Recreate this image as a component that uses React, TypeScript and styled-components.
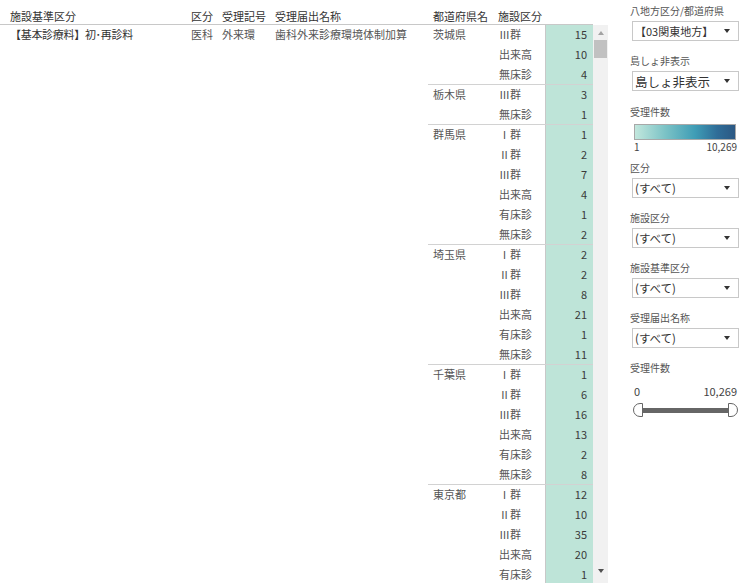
import React from 'react';
import styled, { createGlobalStyle } from 'styled-components';

const GlobalStyle = createGlobalStyle`
  html, body { margin: 0; padding: 0; background: #fff; }
  body {
    font-family: "Noto Sans CJK JP", "Noto Sans", sans-serif;
    font-size: 11px;
    color: #333;
    overflow: hidden;
  }
  * { box-sizing: border-box; }
`;

const Page = styled.div`
  display: flex;
  width: 743px;
  height: 583px;
  overflow: hidden;
`;

const TableArea = styled.div`
  width: 608px;
  flex-shrink: 0;
  display: flex;
  flex-direction: column;
`;

const HeaderRow = styled.div`
  display: grid;
  grid-template-columns: 191px 31px 53px 153px 66px 51px 48px;
  width: 593px;
  height: 25px;
  border-bottom: 1px solid #c8c8c8;
`;

const HeaderCell = styled.div<{ $pl?: number }>`
  padding-left: ${(p) => p.$pl ?? 0}px;
  padding-top: 10px;
  line-height: 13px;
  color: #333;
  white-space: nowrap;
`;

const Body = styled.div`
  display: flex;
  height: 558px;
  overflow: hidden;
`;

const LeftBlock = styled.div`
  width: 428px;
  flex-shrink: 0;
  display: grid;
  grid-template-columns: 191px 31px 53px 153px;
  align-content: start;
`;

const TextCell = styled.div<{ $pl?: number; $dark?: boolean; $ls?: number }>`
  padding-left: ${(p) => p.$pl ?? 0}px;
  padding-top: 1px;
  line-height: 17px;
  letter-spacing: ${(p) => p.$ls ?? 0}px;
  color: ${(p) => (p.$dark ? '#333' : '#555')};
  white-space: nowrap;
`;

const GroupsColumn = styled.div`
  width: 165px;
  flex-shrink: 0;
  display: flex;
  flex-direction: column;
`;

const Group = styled.div<{ $first?: boolean }>`
  display: flex;
  border-top: ${(p) => (p.$first ? 'none' : '1px solid #d2d2d2')};
  margin-top: ${(p) => (p.$first ? 0 : -1)}px;
`;

const PrefCell = styled.div`
  width: 66px;
  flex-shrink: 0;
  padding-left: 5px;
  padding-top: 1px;
  line-height: 17px;
  color: #555;
`;

const RowsCol = styled.div`
  display: flex;
  flex-direction: column;
`;

const DataRow = styled.div`
  display: flex;
  height: 20px;
`;

const TypeCell = styled.div`
  width: 51px;
  padding-left: 5px;
  padding-top: 1px;
  line-height: 17px;
  color: #555;
  white-space: nowrap;
`;

const ValueCell = styled.div`
  width: 48px;
  background: #bee4d8;
  border-left: 1px solid #c8c8c8;
  text-align: right;
  padding-right: 6px;
  padding-top: 1px;
  line-height: 17px;
  color: #3a3a3a;
`;

const Scrollbar = styled.div`
  width: 15px;
  flex-shrink: 0;
  background: #f1f1f1;
  display: flex;
  flex-direction: column;
  align-items: center;
`;

const ArrowBox = styled.div<{ $bottom?: boolean }>`
  width: 15px;
  height: 15px;
  display: flex;
  align-items: center;
  justify-content: center;
  margin-bottom: ${(p) => (p.$bottom ? 5 : 0)}px;
`;

const Tri = styled.div<{ $dir: 'up' | 'down'; $color: string }>`
  width: 0;
  height: 0;
  border-left: 3.5px solid transparent;
  border-right: 3.5px solid transparent;
  ${(p) =>
    p.$dir === 'up'
      ? `border-bottom: 4px solid ${p.$color};`
      : `border-top: 4px solid ${p.$color};`}
`;

const Thumb = styled.div`
  width: 13px;
  height: 18px;
  background: #c1c1c1;
`;

const Spacer = styled.div`
  flex: 1;
`;

const Panel = styled.div`
  margin-left: 22px;
  width: 110px;
  padding-top: 4px;
  display: flex;
  flex-direction: column;
`;

const Filter = styled.div<{ $mt?: number }>`
  margin-top: ${(p) => p.$mt ?? 0}px;
  display: flex;
  flex-direction: column;
`;

const FilterLabel = styled.div`
  font-size: 10px;
  line-height: 14px;
  height: 14px;
  color: #555;
  white-space: nowrap;
`;

const Dropdown = styled.div<{ $fs?: number }>`
  margin-top: 3px;
  margin-left: 2px;
  width: 107px;
  height: 20px;
  border: 1px solid #c8c8c8;
  display: flex;
  align-items: center;
  justify-content: space-between;
  padding: 0 8px 0 2px;
  font-size: ${(p) => p.$fs ?? 11.5}px;
  color: #333;
  white-space: nowrap;
`;

const LegendBar = styled.div`
  margin-top: 5px;
  margin-left: 4px;
  width: 102px;
  height: 16px;
  border: 1px solid #a8a8a8;
  background: linear-gradient(to right, #c2e7dd 0%, #7cc3c6 30%, #3f9db6 60%, #2f6d98 82%, #2c5883 100%);
`;

const RangeText = styled.div<{ $fs: number; $lh: number; $mt?: number }>`
  margin-top: ${(p) => p.$mt ?? 0}px;
  display: flex;
  justify-content: space-between;
  padding: 0 3px 0 4px;
  font-size: ${(p) => p.$fs}px;
  line-height: ${(p) => p.$lh}px;
  color: #444;
`;

const SliderRow = styled.div`
  margin-top: 6px;
  margin-left: 3px;
  width: 105px;
  height: 14px;
  display: flex;
  align-items: center;
`;

const Handle = styled.div<{ $side: 'left' | 'right' }>`
  width: 10px;
  height: 14px;
  background: #fff;
  border: 1px solid #666;
  border-radius: ${(p) => (p.$side === 'left' ? '7px 0 0 7px' : '0 7px 7px 0')};
`;

const SliderBar = styled.div`
  flex: 1;
  height: 5px;
  background: #666;
`;

type Row = [string, number];
const groups: { pref: string; rows: Row[] }[] = [
  { pref: '茨城県', rows: [['Ⅲ群', 15], ['出来高', 10], ['無床診', 4]] },
  { pref: '栃木県', rows: [['Ⅲ群', 3], ['無床診', 1]] },
  {
    pref: '群馬県',
    rows: [['Ⅰ群', 1], ['Ⅱ群', 2], ['Ⅲ群', 7], ['出来高', 4], ['有床診', 1], ['無床診', 2]],
  },
  {
    pref: '埼玉県',
    rows: [['Ⅰ群', 2], ['Ⅱ群', 2], ['Ⅲ群', 8], ['出来高', 21], ['有床診', 1], ['無床診', 11]],
  },
  {
    pref: '千葉県',
    rows: [['Ⅰ群', 1], ['Ⅱ群', 6], ['Ⅲ群', 16], ['出来高', 13], ['有床診', 2], ['無床診', 8]],
  },
  {
    pref: '東京都',
    rows: [['Ⅰ群', 12], ['Ⅱ群', 10], ['Ⅲ群', 35], ['出来高', 20], ['有床診', 1]],
  },
];

const Arrow = () => <Tri $dir="down" $color="#333" />;

const SelectFilter = ({ label, value, mt, fs }: { label: string; value: string; mt?: number; fs?: number }) => (
  <Filter $mt={mt}>
    <FilterLabel>{label}</FilterLabel>
    <Dropdown $fs={fs}>
      <span>{value}</span>
      <Arrow />
    </Dropdown>
  </Filter>
);

export default function App() {
  return (
    <>
      <GlobalStyle />
      <Page>
        <TableArea>
          <HeaderRow>
            <HeaderCell $pl={10}>施設基準区分</HeaderCell>
            <HeaderCell>区分</HeaderCell>
            <HeaderCell>受理記号</HeaderCell>
            <HeaderCell>受理届出名称</HeaderCell>
            <HeaderCell $pl={5}>都道府県名</HeaderCell>
            <HeaderCell $pl={4}>施設区分</HeaderCell>
            <HeaderCell />
          </HeaderRow>
          <Body>
            <LeftBlock>
              <TextCell $pl={10} $dark $ls={-0.3}>【基本診療料】初･再診料</TextCell>
              <TextCell>医科</TextCell>
              <TextCell>外来環</TextCell>
              <TextCell>歯科外来診療環境体制加算</TextCell>
            </LeftBlock>
            <GroupsColumn>
              {groups.map((g, i) => (
                <Group key={g.pref} $first={i === 0}>
                  <PrefCell>{g.pref}</PrefCell>
                  <RowsCol>
                    {g.rows.map(([t, v]) => (
                      <DataRow key={t}>
                        <TypeCell>{t}</TypeCell>
                        <ValueCell>{v}</ValueCell>
                      </DataRow>
                    ))}
                  </RowsCol>
                </Group>
              ))}
            </GroupsColumn>
            <Scrollbar>
              <ArrowBox>
                <Tri $dir="up" $color="#a3a3a3" />
              </ArrowBox>
              <Thumb />
              <Spacer />
              <ArrowBox $bottom>
                <Tri $dir="down" $color="#505050" />
              </ArrowBox>
            </Scrollbar>
          </Body>
        </TableArea>
        <Panel>
          <SelectFilter label="八地方区分/都道府県" value="【03関東地方】" fs={11} />
          <SelectFilter label="島しょ非表示" value="島しょ非表示" mt={13} fs={12.5} />
          <Filter $mt={14}>
            <FilterLabel>受理件数</FilterLabel>
            <LegendBar />
            <RangeText $fs={10} $lh={12} $mt={1}>
              <span>1</span>
              <span>10,269</span>
            </RangeText>
          </Filter>
          <SelectFilter label="区分" value="(すべて)" mt={8} />
          <SelectFilter label="施設区分" value="(すべて)" mt={13} />
          <SelectFilter label="施設基準区分" value="(すべて)" mt={13} />
          <SelectFilter label="受理届出名称" value="(すべて)" mt={13} />
          <Filter $mt={13}>
            <FilterLabel>受理件数</FilterLabel>
            <RangeText $fs={11} $lh={12} $mt={10}>
              <span>0</span>
              <span>10,269</span>
            </RangeText>
            <SliderRow>
              <Handle $side="left" />
              <SliderBar />
              <Handle $side="right" />
            </SliderRow>
          </Filter>
        </Panel>
      </Page>
    </>
  );
}
